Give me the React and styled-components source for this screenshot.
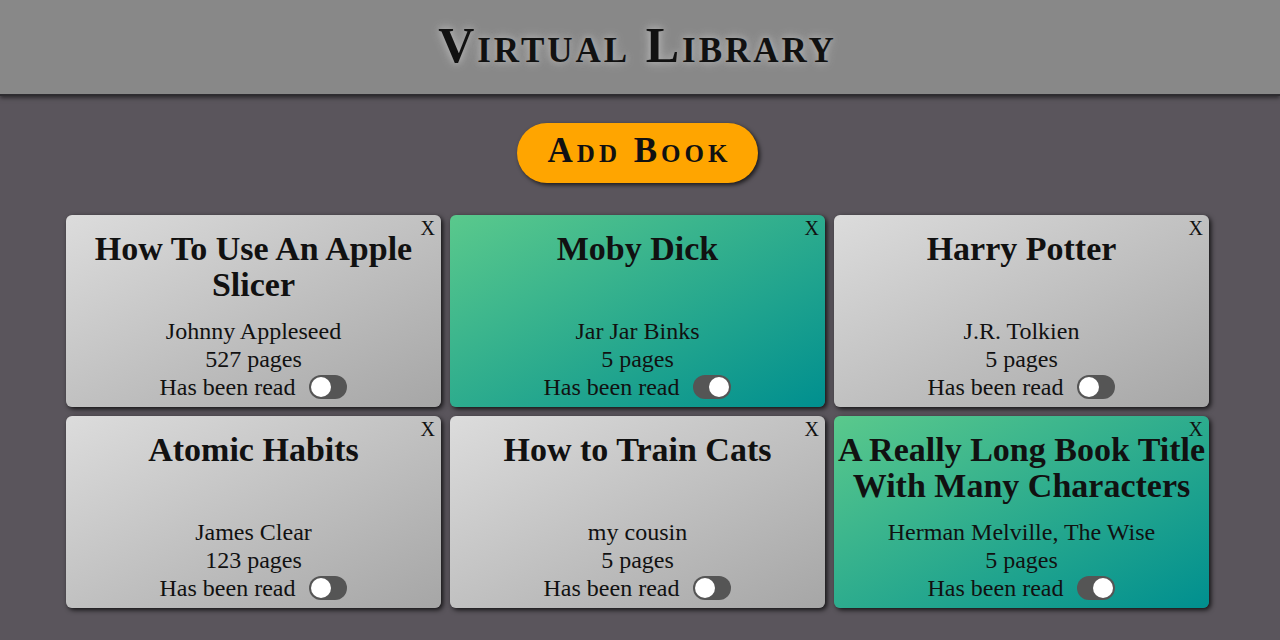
import { useState } from "react";
import styled, { createGlobalStyle } from "styled-components";

const GlobalStyle = createGlobalStyle`
  html, body {
    margin: 0;
    padding: 0;
    background: #5a555c;
  }
  body {
    font-family: "Liberation Serif", "DejaVu Serif", serif;
    height: 640px;
    overflow: hidden;
  }
`;

const Header = styled.header`
  height: 94px;
  background: #888888;
  border-bottom: 2px solid #2e2c30;
  box-shadow: 0 2px 4px rgba(0, 0, 0, 0.5);
  display: flex;
  align-items: center;
  justify-content: center;
  padding-right: 5px;
`;

const Title = styled.h1`
  margin: 0 0 4px;
  font-size: 50px;
  font-weight: bold;
  font-variant: small-caps;
  letter-spacing: 3px;
  color: #111;
  text-shadow: 0 0 12px #b8b8b8, 0 0 6px #a8a8a8;
`;

const Main = styled.main`
  display: flex;
  flex-direction: column;
  align-items: center;
  padding-top: 27px;
  padding-right: 5px;
`;

const AddButton = styled.button`
  width: 241px;
  height: 60px;
  border: none;
  border-radius: 30px;
  background: #ffa500;
  box-shadow: 2px 2px 4px rgba(0, 0, 0, 0.7);
  font-family: inherit;
  font-size: 35px;
  font-weight: bold;
  font-variant: small-caps;
  letter-spacing: 4px;
  color: #111;
  cursor: pointer;
  padding: 0 0 4px 4px;
`;

const Grid = styled.div`
  display: grid;
  grid-template-columns: repeat(3, 375px);
  grid-auto-rows: 192px;
  gap: 9px;
  margin-top: 32px;
`;

const Card = styled.div`
  position: relative;
  border-radius: 6px;
  box-shadow: 2px 2px 5px rgba(0, 0, 0, 0.8);
  background: ${(p) =>
    p.read
      ? "linear-gradient(to bottom right, #5ac98c, #008f8f)"
      : "linear-gradient(to bottom right, #dcdcdc, #a6a6a6)"};
  display: flex;
  flex-direction: column;
  justify-content: space-between;
  align-items: center;
  padding: 16px 0 6px;
  box-sizing: border-box;
  text-align: center;
  color: #111;
`;

const Close = styled.button`
  position: absolute;
  top: 2px;
  right: 6px;
  border: none;
  background: none;
  padding: 0;
  font-family: inherit;
  font-size: 20px;
  color: #111;
  cursor: pointer;
`;

const BookTitle = styled.h2`
  margin: 0;
  font-size: 34px;
  line-height: 36px;
  font-weight: bold;
`;

const Info = styled.div`
  display: flex;
  flex-direction: column;
  align-items: center;
  font-size: 24px;
  line-height: 28px;
`;

const ReadRow = styled.label`
  display: flex;
  align-items: center;
  gap: 14px;
  cursor: pointer;
`;

const Track = styled.span`
  position: relative;
  width: 38px;
  height: 24px;
  border-radius: 12px;
  background: #555;
  display: inline-block;
`;

const Knob = styled.span`
  position: absolute;
  top: 2px;
  left: ${(p) => (p.on ? "16px" : "2px")};
  width: 20px;
  height: 20px;
  border-radius: 50%;
  background: #fff;
`;

const initialBooks = [
  { id: 1, title: "How To Use An Apple Slicer", author: "Johnny Appleseed", pages: 527, read: false },
  { id: 2, title: "Moby Dick", author: "Jar Jar Binks", pages: 5, read: true },
  { id: 3, title: "Harry Potter", author: "J.R. Tolkien", pages: 5, read: false },
  { id: 4, title: "Atomic Habits", author: "James Clear", pages: 123, read: false },
  { id: 5, title: "How to Train Cats", author: "my cousin", pages: 5, read: false },
  { id: 6, title: "A Really Long Book Title With Many Characters", author: "Herman Melville, The Wise", pages: 5, read: true },
];

function BookCard({ book, onToggle, onRemove }) {
  return (
    <Card read={book.read}>
      <Close onClick={onRemove}>X</Close>
      <BookTitle>{book.title}</BookTitle>
      <Info>
        <div>{book.author}</div>
        <div>{book.pages} pages</div>
        <ReadRow onClick={onToggle}>
          Has been read
          <Track>
            <Knob on={book.read} />
          </Track>
        </ReadRow>
      </Info>
    </Card>
  );
}

export default function App() {
  const [books, setBooks] = useState(initialBooks);

  const toggle = (id) =>
    setBooks(books.map((b) => (b.id === id ? { ...b, read: !b.read } : b)));
  const remove = (id) => setBooks(books.filter((b) => b.id !== id));

  return (
    <>
      <GlobalStyle />
      <Header>
        <Title>Virtual Library</Title>
      </Header>
      <Main>
        <AddButton>Add Book</AddButton>
        <Grid>
          {books.map((b) => (
            <BookCard
              key={b.id}
              book={b}
              onToggle={() => toggle(b.id)}
              onRemove={() => remove(b.id)}
            />
          ))}
        </Grid>
      </Main>
    </>
  );
}
